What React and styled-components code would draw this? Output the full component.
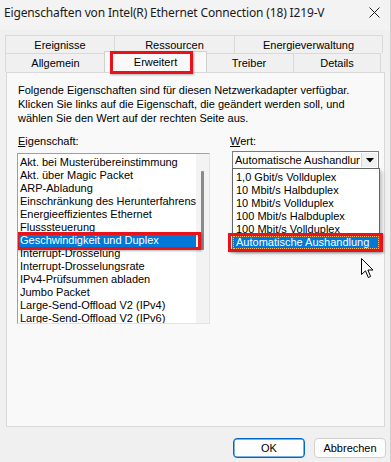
import React from "react";
import styled, { createGlobalStyle } from "styled-components";

const Global = createGlobalStyle`
  html, body { margin: 0; padding: 0; background: #f0f0f0; }
  body { font-family: "Liberation Sans", Arial, sans-serif; font-size: 11px; color: #000; }
`;

const Window = styled.div`
  position: relative;
  width: 391px;
  height: 462px;
  background: #f0f0f0;
  box-sizing: border-box;
  border-right: 1px solid #cfcfcf;
  display: flex;
  flex-direction: column;
  overflow: hidden;
`;

const TitleBar = styled.div`
  height: 30px;
  display: flex;
  align-items: center;
  justify-content: space-between;
  padding: 0 10px 0 4px;
  background: #f3f3f3;
  font-family: "Noto Sans", sans-serif;
  font-size: 12px;
  color: #1a1a1a;
`;

const TitleText = styled.span`
  margin-top: -6px;
  letter-spacing: -0.15px;
`;

const Close = styled.span`
  margin-top: -6px;
  display: flex;
`;

const Tabs = styled.div`
  margin: 5px 0 0 5px;
  width: 378px;
  display: flex;
  flex-direction: column;
`;

const TabRow = styled.div`
  display: flex;
  height: ${(p) => p.$h}px;
  align-items: stretch;
`;

const Tab = styled.div`
  position: relative;
  width: ${(p) => p.$w}px;
  box-sizing: border-box;
  display: flex;
  align-items: center;
  justify-content: center;
  background: ${(p) => (p.$active ? "#f9f9f9" : "#f0f0f0")};
  border: 1px solid #d9d9d9;
  border-bottom: none;
  margin-left: -1px;
  &:first-child { margin-left: 0; }
  ${(p) =>
    p.$active &&
    `
    margin-top: -2px;
    height: 21px;
    margin-right: -2px;
    margin-left: -2px;
    z-index: 2;
    border-color: #d0d0d0;
  `}
`;

const RedBox = styled.div`
  position: absolute;
  left: ${(p) => p.$l}px;
  top: ${(p) => p.$t}px;
  right: ${(p) => p.$r}px;
  bottom: ${(p) => p.$b}px;
  border: 3px solid #e8121b;
  box-shadow: 1px 1px 2px rgba(0,0,0,0.3);
  pointer-events: none;
  z-index: 5;
`;

const Panel = styled.div`
  margin-left: 6px;
  width: 379px;
  height: 355px;
  box-sizing: border-box;
  border: 1px solid #d9d9d9;
  background: #f9f9f9;
  padding: 10px 11px 0 11px;
  position: relative;
  z-index: 1;
`;

const Intro = styled.p`
  margin: 0;
  line-height: 14px;
  color: #000;
`;

const Columns = styled.div`
  margin-top: 9px;
  display: grid;
  grid-template-columns: 212px 1fr;
`;

const Column = styled.div`
  display: flex;
  flex-direction: column;
  position: relative;
`;

const Label = styled.label`
  height: 14px;
  line-height: 14px;
  margin-bottom: ${(p) => p.$mb}px;
  u { text-decoration: underline; }
`;

const ListBox = styled.div`
  margin-left: -1px;
  width: 193px;
  height: 171px;
  box-sizing: border-box;
  border: 1px solid #a0a0a0;
  border-right-color: #e3e3e3;
  border-bottom-color: #e3e3e3;
  background: #fff;
  display: flex;
  overflow: hidden;
`;

const ListItems = styled.div`
  flex: 1;
  padding-top: 2px;
  display: flex;
  flex-direction: column;
`;

const Item = styled.div`
  position: relative;
  height: 13px;
  line-height: 13px;
  padding-left: ${(p) => p.$pl || 2}px;
  white-space: nowrap;
  background: ${(p) => (p.$sel ? "#0078d7" : "transparent")};
  color: ${(p) => (p.$sel ? "#fff" : "#000")};
`;

const ScrollTrack = styled.div`
  width: 16px;
  background: #f3f3f3;
  display: flex;
  justify-content: center;
  padding-top: 17px;
  box-sizing: border-box;
`;

const Thumb = styled.div`
  width: 3px;
  height: 79px;
  background: #8b8b8b;
  border-radius: 1px;
`;

const Combo = styled.div`
  margin-left: 2px;
  width: 147px;
  height: 18px;
  box-sizing: border-box;
  border: 1px solid #7a7a7a;
  background: #fff;
  display: flex;
  align-items: stretch;
  margin-top: -2px;
`;

const ComboText = styled.div`
  flex: 1;
  overflow: hidden;
  white-space: nowrap;
  line-height: 16px;
  padding-left: 2px;
`;

const ComboButton = styled.div`
  width: 15px;
  border-left: 1px solid #d4d4d4;
  background: #f0f0f0;
  display: flex;
  align-items: center;
  justify-content: center;
  margin: 1px;
`;

const Popup = styled.div`
  position: absolute;
  left: 2px;
  top: 34px;
  width: 148px;
  height: 82px;
  box-sizing: border-box;
  border: 1px solid #646464;
  background: #fff;
  box-shadow: 2px 3px 4px rgba(0,0,0,0.25);
  padding-top: 2px;
  z-index: 4;
`;

const Focus = styled.div`
  position: absolute;
  inset: 0;
  border: 1px dotted #f7b76a;
`;

const Cursor = styled.svg`
  position: absolute;
  left: 361px;
  top: 258px;
  z-index: 6;
`;

const Footer = styled.div`
  display: flex;
  justify-content: flex-end;
  gap: 9px;
  padding: 11px 4px 0 0;
`;

const Button = styled.button`
  width: 72px;
  height: 20px;
  box-sizing: border-box;
  font-family: "Liberation Sans", Arial, sans-serif;
  font-size: 11px;
  color: #000;
  background: #fdfdfd;
  border: 1px solid ${(p) => (p.$primary ? "#0067c0" : "#d0d0d0")};
  border-radius: 4px;
  padding: 0;
  ${(p) => (p.$primary ? "box-shadow: inset 0 0 0 0.5px #0067c0;" : "")}
`;

const props = [
  "Akt. bei Musterübereinstimmung",
  "Akt. über Magic Packet",
  "ARP-Abladung",
  "Einschränkung des Herunterfahrens",
  "Energieeffizientes Ethernet",
  "Flusssteuerung",
  "Geschwindigkeit und Duplex",
  "Interrupt-Drosselung",
  "Interrupt-Drosselungsrate",
  "IPv4-Prüfsummen abladen",
  "Jumbo Packet",
  "Large-Send-Offload V2 (IPv4)",
  "Large-Send-Offload V2 (IPv6)",
];

const values = [
  "1,0 Gbit/s Vollduplex",
  "10 Mbit/s Halbduplex",
  "10 Mbit/s Vollduplex",
  "100 Mbit/s Halbduplex",
  "100 Mbit/s Vollduplex",
  "Automatische Aushandlung",
];

export default function App() {
  return (
    <>
      <Global />
      <Window>
        <TitleBar>
          <TitleText>Eigenschaften von Intel(R) Ethernet Connection (18) I219-V</TitleText>
          <Close>
            <svg width="11" height="11" viewBox="0 0 11 11">
              <path d="M0.5 0.5 L10.5 10.5 M10.5 0.5 L0.5 10.5" stroke="#222" strokeWidth="1" />
            </svg>
          </Close>
        </TitleBar>
        <Tabs>
          <TabRow $h={18}>
            <Tab $w={110}>Ereignisse</Tab>
            <Tab $w={121}>Ressourcen</Tab>
            <Tab $w={149}>Energieverwaltung</Tab>
          </TabRow>
          <TabRow $h={19}>
            <Tab $w={101}>Allgemein</Tab>
            <Tab $w={103} $active>
              Erweitert
              <RedBox $l={5} $t={-1} $r={13} $b={-2} />
            </Tab>
            <Tab $w={90}>Treiber</Tab>
            <Tab $w={88}>Details</Tab>
          </TabRow>
        </Tabs>
        <Panel>
          <Intro>
            Folgende Eigenschaften sind für diesen Netzwerkadapter verfügbar.
            <br />
            Klicken Sie links auf die Eigenschaft, die geändert werden soll, und
            <br />
            wählen Sie den Wert auf der rechten Seite aus.
          </Intro>
          <Columns>
            <Column>
              <Label $mb={5}>
                <u>E</u>igenschaft:
              </Label>
              <ListBox>
                <ListItems>
                  {props.map((p) => (
                    <Item key={p} $sel={p === "Geschwindigkeit und Duplex"}>
                      {p}
                      {p === "Geschwindigkeit und Duplex" && (
                        <RedBox $l={-2} $t={-2} $r={-5} $b={-3} />
                      )}
                    </Item>
                  ))}
                </ListItems>
                <ScrollTrack>
                  <Thumb />
                </ScrollTrack>
              </ListBox>
            </Column>
            <Column>
              <Label $mb={5}>
                <u>W</u>ert:
              </Label>
              <Combo>
                <ComboText>Automatische Aushandlung</ComboText>
                <ComboButton>
                  <svg width="8" height="5" viewBox="0 0 8 5">
                    <path d="M0 0 H8 L4 4.5 Z" fill="#000" />
                  </svg>
                </ComboButton>
              </Combo>
              <Popup>
                {values.map((v) => (
                  <Item key={v} $sel={v === "Automatische Aushandlung"} $pl={3}>
                    {v}
                    {v === "Automatische Aushandlung" && (
                      <>
                        <Focus />
                        <RedBox $l={-5} $t={-3} $r={-4} $b={-3} />
                      </>
                    )}
                  </Item>
                ))}
              </Popup>
            </Column>
          </Columns>
        </Panel>
        <Footer>
          <Button $primary>OK</Button>
          <Button>Abbrechen</Button>
        </Footer>
        <Cursor width="13" height="21" viewBox="0 0 13 21">
          <path d="M0.5 0.5 L0.5 16.5 L4.5 12.8 L7.3 19.5 L9.6 18.5 L6.9 12 L12 12 Z" fill="#fff" stroke="#000" strokeWidth="1" strokeLinejoin="miter" />
        </Cursor>
      </Window>
    </>
  );
}
